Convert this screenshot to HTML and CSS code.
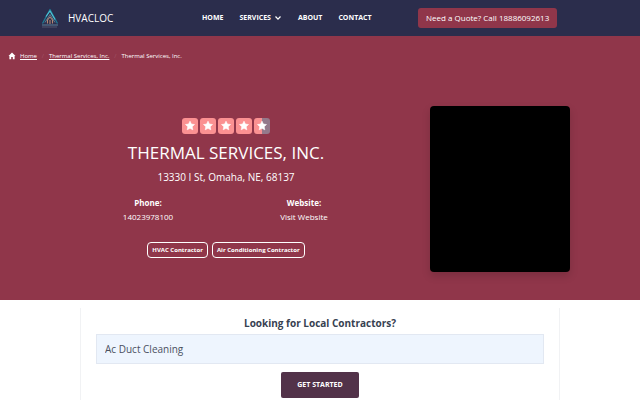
FILE: index.html
```html
<!DOCTYPE html>
<html lang="en">
<head>
<meta charset="utf-8">
<meta name="viewport" content="width=device-width, initial-scale=1">
<title>Thermal Services, Inc. - HVACLOC</title>
<link rel="stylesheet" href="styles.css">
</head>
<body>
<header class="topbar">
  <a class="brand" href="#">
    <svg class="brand-logo" viewBox="0 0 20 20" aria-hidden="true">
      <g fill="none" stroke-linejoin="round">
        <path d="M2.5 15.5L10 1.5L17.5 15.5" stroke="#1f7c96" stroke-width="1.3"/>
        <path d="M6 8.5L10 3L15 11.5" stroke="#4fc3d5" stroke-width="1.2"/>
        <path d="M5 14.5L10 6.5L15 14.5" stroke="#6c93a5" stroke-width=".8"/>
        <path d="M7.5 15.5V12L10 9L12.5 12V15.5M10 12V16" stroke="#b48772" stroke-width="1.1"/>
        <path d="M2 17H18" stroke="#5f829a" stroke-width="1"/>
        <path d="M2 19H17" stroke="#55576f" stroke-width="1"/>
      </g>
    </svg>
    <span>HVACLOC</span>
  </a>
  <nav class="menu" aria-label="Main">
    <a href="#">HOME</a>
    <a href="#">SERVICES
      <svg class="chevron" viewBox="0 0 8 8" aria-hidden="true"><path d="M1.5 2.5L4 5.2L6.5 2.5" fill="none" stroke="currentColor" stroke-width="1.2"/></svg>
    </a>
    <a href="#">ABOUT</a>
    <a href="#">CONTACT</a>
  </nav>
  <a class="quote" href="tel:18886092613">Need a Quote? Call 18886092613</a>
</header>
<main>
  <section class="hero">
    <nav class="crumbs" aria-label="Breadcrumb">
      <a class="crumb-home" href="#">
        <svg class="home-icon" viewBox="0 0 8 8" aria-hidden="true"><path d="M4 .5L.5 3.9H1.4V7.3H3.2V5H4.8V7.3H6.6V3.9H7.5Z" fill="currentColor"/></svg>
        <span>Home</span>
      </a>
      <span class="divider">/</span>
      <a href="#">Thermal Services, Inc.</a>
      <span class="divider">/</span>
      <span>Thermal Services, Inc.</span>
    </nav>
    <div class="hero-body">
      <div class="company">
        <svg class="stars" viewBox="0 0 88 16" role="img" aria-label="4.5 out of 5 stars">
          <defs>
            <path id="star" d="M8 3.2L9.4 6.1L12.5 6.5L10.2 8.7L10.8 11.8L8 10.3L5.2 11.8L5.8 8.7L3.5 6.5L6.6 6.1Z" fill="#fff" stroke="#fff" stroke-width=".6" stroke-linejoin="round"/>
          </defs>
          <g fill="#fb9192">
            <rect width="16" height="16" rx="3"/>
            <rect x="18" width="16" height="16" rx="3"/>
            <rect x="36" width="16" height="16" rx="3"/>
            <rect x="54" width="16" height="16" rx="3"/>
          </g>
          <path d="M75 0H80V16H75A3 3 0 0 1 72 13V3A3 3 0 0 1 75 0Z" fill="#fb9192"/>
          <path d="M80 0H85A3 3 0 0 1 88 3V13A3 3 0 0 1 85 16H80Z" fill="#94798b"/>
          <use href="#star"/>
          <use href="#star" x="18"/>
          <use href="#star" x="36"/>
          <use href="#star" x="54"/>
          <use href="#star" x="72"/>
        </svg>
        <h1>THERMAL SERVICES, INC.</h1>
        <p class="address">13330 I St, Omaha, NE, 68137</p>
        <dl class="contact">
          <div><dt>Phone:</dt><dd><a href="tel:14023978100">14023978100</a></dd></div>
          <div><dt>Website:</dt><dd><a href="#">Visit Website</a></dd></div>
        </dl>
        <div class="tags"><span>HVAC Contractor</span><span>Air Conditioning Contractor</span></div>
      </div>
      <div class="media"></div>
    </div>
  </section>
  <form class="finder">
    <label for="service">Looking for Local Contractors?</label>
    <input id="service" type="text" value="Ac Duct Cleaning">
    <button type="button">GET STARTED</button>
  </form>
</main>
</body>
</html>
```
FILE: styles.css
```css
* { box-sizing: border-box; }

body {
  margin: 0;
  font-family: "Open Sans", "Noto Sans", sans-serif;
  font-size: 8px;
  line-height: 12px;
  color: #374151;
  background: #fff;
}

a { color: inherit; text-decoration: none; }

h1, p, dl, dd { margin: 0; }

.topbar {
  display: grid;
  grid-template-columns: 27% 1fr 37%;
  align-items: center;
  height: 36px;
  padding-left: 40px;
  background: #2b2d4c;
  color: #fff;
}

.brand {
  display: flex;
  align-items: center;
  gap: 8px;
  font-size: 10px;
}

.brand-logo { width: 20px; height: 20px; }

.menu {
  display: flex;
  gap: 16px;
  font-size: 7px;
  font-weight: 700;
  white-space: nowrap;
}

.menu a { display: flex; align-items: center; gap: 3px; }

.chevron { width: 8px; height: 8px; }

.quote {
  justify-self: start;
  padding: 4px 8px;
  border-radius: 3px;
  background: #90364a;
}

.hero {
  height: 264px;
  background: #90364a;
  color: #fff;
}

.crumbs {
  display: flex;
  align-items: center;
  gap: 4px;
  padding: 14px 8px;
  font-size: 6px;
}

.crumbs a { text-decoration: underline; }

.crumbs .crumb-home { display: flex; gap: 4px; align-items: center; }

.home-icon { width: 8px; height: 8px; }

.divider { width: 4px; text-align: center; color: #a35466; }

.hero-body {
  display: grid;
  grid-template-columns: 1fr 28%;
  column-gap: 48px;
  padding: 30px 70px 28px 70px;
}

.company {
  display: flex;
  flex-direction: column;
  align-items: center;
  padding-top: 12px;
  text-align: center;
}

.stars { width: 88px; height: 16px; }

h1 {
  margin-top: 6px;
  font-size: 17px;
  line-height: 26px;
  font-weight: 400;
}

.address {
  margin-top: 3px;
  font-size: 10px;
  line-height: 16px;
}

.contact {
  display: grid;
  grid-template-columns: 1fr 1fr;
  width: 100%;
  margin-top: 11px;
  line-height: 14px;
}

dt { font-weight: 700; }

.tags {
  display: flex;
  gap: 4px;
  margin-top: 18px;
}

.tags span {
  padding: 0 4px;
  border: 1px solid #fff;
  border-radius: 4px;
  font-size: 6px;
  line-height: 14px;
  font-weight: 700;
}

.media {
  height: 166px;
  border-radius: 4px;
  background: #000;
  box-shadow: 0 4px 8px rgba(0, 0, 0, 0.15);
}

.finder {
  display: flex;
  flex-direction: column;
  align-items: center;
  width: 75%;
  margin: 8px auto 0;
  padding: 8px 15px 16px;
  border: 1px solid #f1f2f4;
  border-top: 0;
}

.finder label {
  font-size: 10px;
  line-height: 14px;
  font-weight: 700;
}

.finder input {
  width: 100%;
  height: 30px;
  margin-top: 4px;
  padding: 0 8px;
  border: 1px solid #e2e8f2;
  border-radius: 0;
  background: #eef5fe;
  color: #4a5060;
  font: inherit;
  font-size: 10px;
}

.finder button {
  height: 26px;
  margin-top: 8px;
  padding: 0 16px;
  border: 0;
  border-radius: 2px;
  background: #523249;
  color: #fff;
  font: inherit;
  font-size: 7px;
  font-weight: 700;
}
```
